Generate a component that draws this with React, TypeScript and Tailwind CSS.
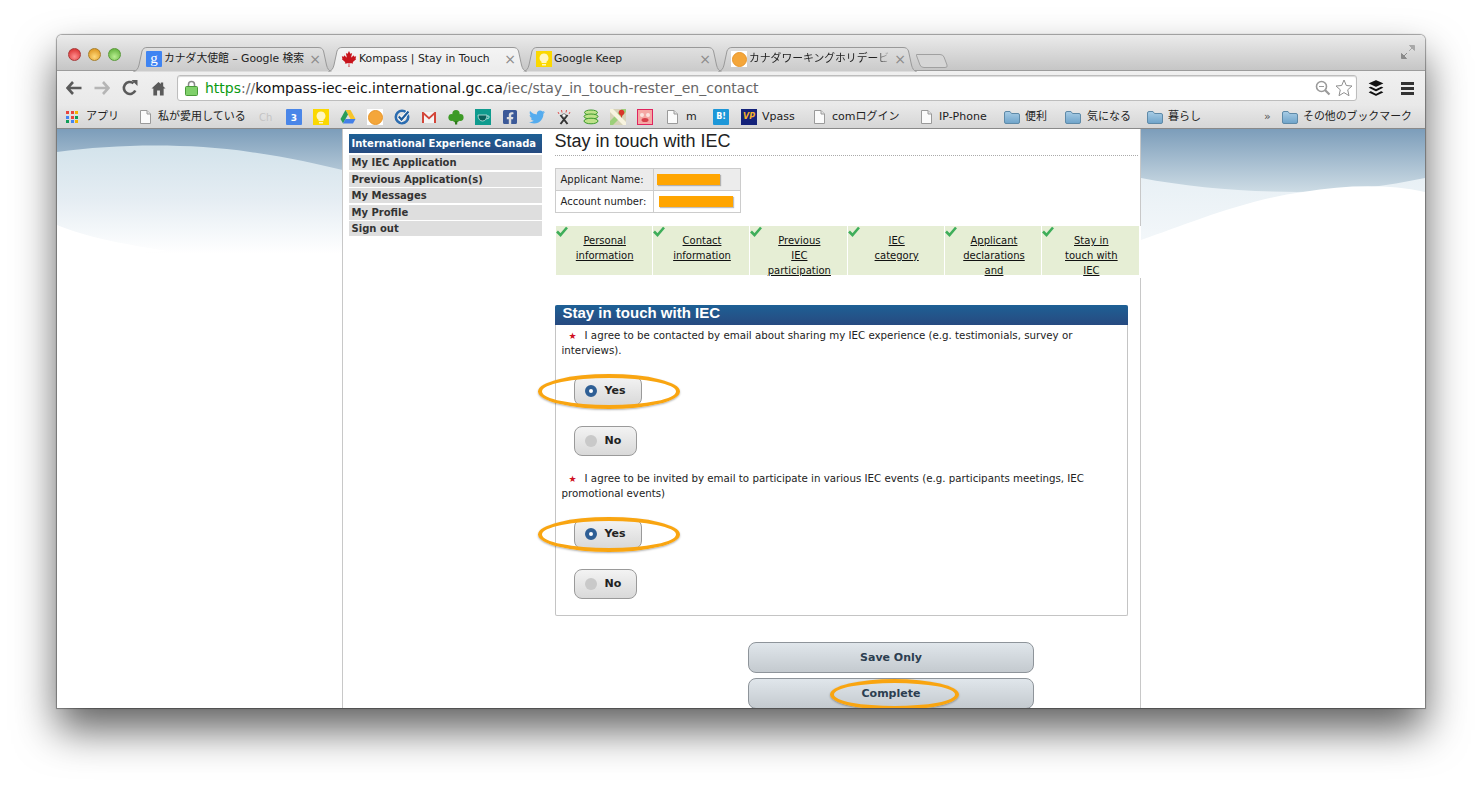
import type { ReactNode } from "react";
import { FaBuffer, FaCanadianMapleLeaf, FaFacebookSquare, FaTwitter } from "react-icons/fa";

const UI_FONT = "font-['DejaVu_Sans','Noto_Sans_CJK_JP',sans-serif]";

function Tab({ icon, title, active, fade }: { icon: ReactNode; title: string; active?: boolean; fade?: boolean }) {
  return (
    <div className={`relative h-[24px] w-[195px] ${active ? "z-10" : ""}`}>
      <svg width="199" height="25" viewBox="0 0 199 25" className="absolute left-0 top-0">
        <defs>
          <linearGradient id="tabOff" x1="0" y1="0" x2="0" y2="1">
            <stop offset="0" stopColor="#e0e0e0" />
            <stop offset="1" stopColor="#cacaca" />
          </linearGradient>
          <linearGradient id="tabOn" x1="0" y1="0" x2="0" y2="1">
            <stop offset="0" stopColor="#f4f4f4" />
            <stop offset="1" stopColor="#ececec" />
          </linearGradient>
        </defs>
        <path
          d="M0.5 24.5 C3.5 24 5 22 6 18 L9 4 C10 1.5 11.5 0.5 14 0.5 L185 0.5 C188 0.5 189.500 1.500 190.500 4 L193.500 18 C194.500 22 196 24 198.500 24.5"
          fill={active ? "url(#tabOn)" : "url(#tabOff)"}
          stroke="#999999"
        />
      </svg>
      <div className="relative flex h-full items-center pl-[13px] pr-[7px]">
        <span className="flex h-4 w-4 shrink-0 items-center justify-center">{icon}</span>
        <span
          className={`ml-[2px] flex-1 whitespace-nowrap pt-[1px] text-[10.800px] text-[#222] ${
            fade ? "[mask-image:linear-gradient(to_right,black_88%,transparent)]" : ""
          }`}
        >
          {title}
        </span>
        <span className="ml-[2px] text-[14px] leading-none text-[#8a8a8a]">×</span>
      </div>
    </div>
  );
}

function GoogleIcon() {
  return (
    <span className="flex h-4 w-4 items-center justify-center rounded-[1px] bg-[#3f84f2] pb-[3px] font-['Liberation_Serif',serif] text-[15px] leading-[12px] text-white">
      g
    </span>
  );
}

function KeepIcon() {
  return (
    <span className="flex h-4 w-4 items-center justify-center bg-[#fbd800]">
      <svg width="10" height="13" viewBox="0 0 10 13">
        <path d="M5 0.500 A4.500 4.500 0 0 1 7.500 8.700 L7.500 10 L2.500 10 L2.500 8.700 A4.500 4.500 0 0 1 5 0.500 Z" fill="#fff6c0" />
        <rect x="3" y="11" width="4" height="1.500" fill="#fff6c0" />
      </svg>
    </span>
  );
}

function OrangeCircle() {
  return (
    <span className="flex h-4 w-4 items-center justify-center bg-white">
      <span className="h-[15px] w-[15px] rounded-full border border-[#e8962a] bg-[#f4a63a]" />
    </span>
  );
}

function PageIcon() {
  return (
    <svg width="11" height="14" viewBox="0 0 11 14" className="shrink-0">
      <path d="M0.500 0.500 H7 L10.500 4 V13.500 H0.500 Z" fill="#fbfbfb" stroke="#9a9a9a" />
      <path d="M7 0.500 V4 H10.500" fill="#e2e2e2" stroke="#9a9a9a" />
    </svg>
  );
}

function FolderIcon() {
  return (
    <svg width="16" height="13" viewBox="0 0 16 13" className="shrink-0">
      <defs>
        <linearGradient id="folder" x1="0" y1="0" x2="0" y2="1">
          <stop offset="0" stopColor="#a9cde6" />
          <stop offset="1" stopColor="#6ea3c9" />
        </linearGradient>
      </defs>
      <path d="M0.500 2 Q0.500 0.500 2 0.500 H6 L7.500 2.500 H14 Q15.500 2.500 15.500 4 V11 Q15.500 12.500 14 12.500 H2 Q0.500 12.500 0.500 11 Z" fill="url(#folder)" stroke="#5f8aa8" />
    </svg>
  );
}

function Favicons() {
  return (
    <div className="ml-[16px] flex items-center gap-[11px]">
      <span className="flex h-4 w-4 items-center justify-center rounded-[1px] bg-[#4a86e8] pt-[2px] text-[9px] font-bold leading-none text-white">3</span>
      <KeepIcon />
      <svg width="16" height="16" viewBox="0 0 16 16">
        <path d="M5.500 1 H10.500 L15.500 10 H10.500 Z" fill="#f7c52b" />
        <path d="M5.500 1 L8 5.500 L3 14.500 L0.500 10 Z" fill="#2a9d58" />
        <path d="M3 14.500 L5.500 10 H15.500 L13 14.500 Z" fill="#4480e8" />
      </svg>
      <OrangeCircle />
      <svg width="16" height="16" viewBox="0 0 16 16">
        <circle cx="8" cy="8" r="6.200" fill="none" stroke="#2b6cb0" strokeWidth="2.600" />
        <path d="M4.800 7.500 L7.500 10.500 L14.500 2.500" fill="none" stroke="#fff" strokeWidth="4" />
        <path d="M4.800 7.500 L7.500 10.500 L14.500 2.500" fill="none" stroke="#1f5c9c" strokeWidth="2.200" />
      </svg>
      <svg width="16" height="16" viewBox="0 0 16 16">
        <rect x="1" y="3" width="14" height="11" fill="#f4f4f4" />
        <path d="M1 14 V3 H2.500 L8 8 L13.500 3 H15 V14 H13 V6 L8 10.500 L3 6 V14 Z" fill="#d3463a" />
      </svg>
      <svg width="16" height="16" viewBox="0 0 16 16">
        <circle cx="8" cy="4.500" r="3.600" fill="#3d9a26" />
        <circle cx="3.800" cy="8.500" r="3.400" fill="#3d9a26" />
        <circle cx="12.200" cy="8.500" r="3.400" fill="#3d9a26" />
        <circle cx="8" cy="10" r="3.400" fill="#3d9a26" />
        <rect x="7" y="12" width="2.200" height="3.500" fill="#2f7a1c" />
      </svg>
      <svg width="16" height="16" viewBox="0 0 16 16">
        <rect width="16" height="16" fill="#0f9b8e" />
        <path d="M3 6 H12 C12 10 10 12 7.500 12 C5 12 3 10 3 6 Z" fill="#0a5f5a" stroke="#c6ebe6" strokeWidth="0.800" />
        <path d="M12 7 H14 V9 L11.500 10" fill="none" stroke="#c6ebe6" strokeWidth="0.800" />
      </svg>
      <FaFacebookSquare className="h-4 w-4 text-[#3b5998]" />
      <FaTwitter className="h-4 w-4 text-[#55acee]" />
      <svg width="16" height="16" viewBox="0 0 16 16">
        <path d="M4.500 6 L11.500 15 M11.500 6 L4.500 15" stroke="#333" strokeWidth="2" />
        <circle cx="8" cy="6.500" r="1.800" fill="#fff" stroke="#555" strokeWidth="0.700" />
        <path d="M2 3 L3 5 M5.500 1 L6 3.500 M10.500 1 L10 3.500 M14 3 L13 5" stroke="#e05050" strokeWidth="1" />
      </svg>
      <svg width="16" height="16" viewBox="0 0 16 16">
        <ellipse cx="8" cy="3.500" rx="6.500" ry="2.500" fill="#bfe28a" stroke="#3c9a2c" />
        <ellipse cx="8" cy="7.500" rx="7" ry="2.500" fill="#bfe28a" stroke="#3c9a2c" />
        <ellipse cx="8" cy="12" rx="7" ry="2.800" fill="#bfe28a" stroke="#3c9a2c" />
      </svg>
      <svg width="16" height="16" viewBox="0 0 16 16">
        <rect width="16" height="16" fill="#d6d2b8" />
        <path d="M0 12 L12 0 H16 V3 L3 16 H0 Z" fill="#9ccf7a" />
        <path d="M3 0 L16 13 V16 H13 L0 3 V0 Z" fill="#f8f4e0" />
        <circle cx="11.500" cy="3.500" r="2.800" fill="#d9352b" />
        <path d="M10 5 L11.500 9 L13 5 Z" fill="#d9352b" />
      </svg>
      <svg width="16" height="16" viewBox="0 0 16 16">
        <rect x="0.500" y="0.500" width="15" height="15" fill="#f5a8a4" stroke="#e0245e" />
        <circle cx="5" cy="6" r="2" fill="#fbe4e0" />
        <circle cx="11" cy="6" r="2" fill="#fbe4e0" />
        <ellipse cx="8" cy="11" rx="3.500" ry="2" fill="#d8404a" />
      </svg>
    </div>
  );
}

function BookmarkBar() {
  return (
    <div className={`flex h-[24px] items-center border-b border-[#8a8a8a] bg-gradient-to-b from-[#e9e9e9] to-[#d6d6d6] pl-[9px] pt-[1px] text-[11px] text-[#222] whitespace-nowrap ${UI_FONT}`}>
      <span className="grid h-3 w-3 shrink-0 grid-cols-3 gap-[1.500px]">
        {["#e8453c", "#e8453c", "#f4b400", "#4285f4", "#e8453c", "#0f9d58", "#0f9d58", "#4285f4", "#f4b400"].map((c, i) => (
          <span key={i} className={c === "#e8453c" ? "bg-[#e8453c]" : c === "#f4b400" ? "bg-[#f4b400]" : c === "#4285f4" ? "bg-[#4285f4]" : "bg-[#0f9d58]"} />
        ))}
      </span>
      <span className="ml-[8px]">アプリ</span>
      <span className="ml-[21px]"><PageIcon /></span>
      <span className="ml-[7px] w-[89px]">私が愛用している</span>
      <span className="ml-[12px] w-[12px] text-[10px] text-[#c4c4c4]">Ch</span>
      <div className="-ml-[1px]"><Favicons /></div>
      <span className="ml-[14px]"><PageIcon /></span>
      <span className="ml-[8px] w-[11px]">m</span>
      <span className="ml-[16px] flex h-4 w-4 items-center justify-center rounded-[1px] bg-[#1d97d8] text-[8px] font-bold leading-none text-white">B!</span>
      <span className="ml-[12px] flex h-4 w-4 items-center justify-center bg-[#14227a] text-[8px] font-bold italic leading-none text-[#f5b02a]">VP</span>
      <span className="ml-[5px] w-[32px]">Vpass</span>
      <span className="ml-[20px]"><PageIcon /></span>
      <span className="ml-[7px] w-[67px]">comログイン</span>
      <span className="ml-[22px]"><PageIcon /></span>
      <span className="ml-[7px] w-[50px]">IP-Phone</span>
      <span className="ml-[15px]"><FolderIcon /></span>
      <span className="ml-[5px] w-[23px]">便利</span>
      <span className="ml-[17px]"><FolderIcon /></span>
      <span className="ml-[6px] w-[44px]">気になる</span>
      <span className="ml-[16px]"><FolderIcon /></span>
      <span className="ml-[5px] w-[33px]">暮らし</span>
      <span className="ml-[63px] w-[8px] text-[#555]">»</span>
      <span className="ml-[10px]"><FolderIcon /></span>
      <span className="ml-[5px] text-[10.900px]">その他のブックマーク</span>
    </div>
  );
}

function Toolbar() {
  return (
    <div className="flex h-[34px] items-center bg-gradient-to-b from-[#f0f0f0] to-[#e9e9e9] pl-[9px]">
      <svg width="16" height="14" viewBox="0 0 16 14" className="shrink-0">
        <path d="M7 1 L1.500 7 L7 13 M2 7 H15.500" fill="none" stroke="#5a5a5a" strokeWidth="2.600" />
      </svg>
      <svg width="16" height="14" viewBox="0 0 16 14" className="ml-[12px] shrink-0">
        <path d="M9 1 L14.500 7 L9 13 M14 7 H0.500" fill="none" stroke="#b5b5b5" strokeWidth="2.600" />
      </svg>
      <svg width="16" height="16" viewBox="0 0 16 16" className="ml-[12px] shrink-0">
        <path d="M13.300 10.500 A6 6 0 1 1 11.500 3.200" fill="none" stroke="#5a5a5a" strokeWidth="2.600" />
        <path d="M9.500 0 H15.500 V6 Z" fill="#5a5a5a" />
      </svg>
      <svg width="15" height="15" viewBox="0 0 16 16" className="ml-[13px] shrink-0">
        <path d="M8 1 L0.500 8 H2.500 V15.500 H6.500 V10 H9.500 V15.500 H13.500 V8 H15.500 L13 5.600 V1.500 H10.500 V3.300 Z" fill="#5a5a5a" />
      </svg>
      <div className={`ml-[11px] flex h-[26px] w-[1180px] items-center rounded-[3px] border border-[#bdbdbd] bg-white pl-[7px] pr-[3px] shadow-[inset_0_1px_1px_rgba(0,0,0,0.15)] ${UI_FONT}`}>
        <svg width="13" height="16" viewBox="0 0 13 16" className="shrink-0">
          <path d="M3.500 7 V4.500 A3 3 0 0 1 9.500 4.500 V7" fill="none" stroke="#8a8a8a" strokeWidth="1.500" />
          <rect x="0.500" y="6.500" width="12" height="9" rx="1" fill="#7fd06a" stroke="#4a9a3a" />
        </svg>
        <span className="ml-[7px] flex-1 whitespace-nowrap pt-[1px] text-[14px]">
          <span className="text-[#0b9a12]">https</span>
          <span className="text-[#666]">://</span>
          <span className="text-[#111]">kompass-iec-eic.international.gc.ca</span>
          <span className="text-[#666]">/iec/stay_in_touch-rester_en_contact</span>
        </span>
        <svg width="16" height="16" viewBox="0 0 16 16" className="shrink-0">
          <circle cx="6.500" cy="6.500" r="5" fill="none" stroke="#9a9a9a" strokeWidth="1.600" />
          <path d="M10 10 L14.500 14.500" stroke="#9a9a9a" strokeWidth="2.200" />
          <path d="M4 6.500 H9" stroke="#9a9a9a" strokeWidth="1.200" />
        </svg>
        <svg width="18" height="18" viewBox="0 0 18 18" className="ml-[4px] shrink-0">
          <path d="M9 1 L11.300 6.500 L17 7 L12.700 10.800 L14 16.700 L9 13.600 L4 16.700 L5.300 10.800 L1 7 L6.700 6.500 Z" fill="#fff" stroke="#8f8f8f" />
        </svg>
      </div>
      <FaBuffer className="ml-[10px] h-[18px] w-[18px] shrink-0 text-[#111]" />
      <div className="ml-[16px] flex w-[13px] shrink-0 flex-col gap-[2px]">
        <span className="h-[3px] bg-[#333]" />
        <span className="h-[3px] bg-[#333]" />
        <span className="h-[3px] bg-[#333]" />
      </div>
    </div>
  );
}

function TitleBar() {
  return (
    <div className={`relative flex h-[36px] shrink-0 items-end border-b border-[#9c9c9c] bg-gradient-to-b from-[#ebebeb] to-[#c6c6c6] ${UI_FONT}`}>
      <div className="absolute left-[11px] top-[13px] flex gap-[7px]">
        <span className="h-[13px] w-[13px] rounded-full border border-[#a83a3a] bg-[radial-gradient(circle_at_50%_70%,#ff8f8f,#d42020)]" />
        <span className="h-[13px] w-[13px] rounded-full border border-[#a8802a] bg-[radial-gradient(circle_at_50%_70%,#ffd97a,#d88a10)]" />
        <span className="h-[13px] w-[13px] rounded-full border border-[#5a9a3a] bg-[radial-gradient(circle_at_50%_70%,#b8ee90,#56a830)]" />
      </div>
      <div className="relative z-10 -mb-[1px] ml-[76px] flex">
        <Tab icon={<GoogleIcon />} title="カナダ大使館 – Google 検索" />
        <Tab active icon={<FaCanadianMapleLeaf className="h-4 w-4 text-[#c8141c]" />} title="Kompass | Stay in Touch" />
        <Tab icon={<KeepIcon />} title="Google Keep" />
        <Tab fade icon={<OrangeCircle />} title="カナダワーキングホリデービ" />
      </div>
      <svg width="34" height="14" viewBox="0 0 34 14" className="mb-[2px] ml-[3px]">
        <path d="M0.500 0.500 H24 Q27 0.500 28 3 L31 11 Q32 13.500 29 13.500 H8 Q5 13.500 4 11 L1 3 Q0 0.500 0.500 0.500 Z" fill="#d6d6d6" stroke="#a0a0a0" />
      </svg>
      <svg width="14" height="14" viewBox="0 0 14 14" className="absolute right-[10px] top-[10px]">
        <path d="M8.500 0.500 H13.500 V5.500 Z M8 6 L11 3" fill="#a8a8a8" stroke="#a8a8a8" />
        <path d="M0.500 8.500 V13.500 H5.500 Z M6 8 L3 11" fill="#8a8a8a" stroke="#8a8a8a" />
      </svg>
    </div>
  );
}

function Waves() {
  return (
    <svg viewBox="0 0 1368 579" className="absolute inset-0 h-full w-full">
      <defs>
        <linearGradient id="sky" x1="0" y1="0" x2="0" y2="1">
          <stop offset="0" stopColor="#7c9dba" />
          <stop offset="1" stopColor="#d0dee6" />
        </linearGradient>
        <linearGradient id="lightLeft" x1="0" y1="0" x2="0" y2="1">
          <stop offset="0" stopColor="#d3e3eb" />
          <stop offset="0.500" stopColor="#e5edf3" />
          <stop offset="1" stopColor="#ffffff" />
        </linearGradient>
        <linearGradient id="lightRight" x1="0" y1="0" x2="0" y2="1">
          <stop offset="0" stopColor="#e8f0f5" />
          <stop offset="1" stopColor="#f6f9fb" />
        </linearGradient>
      </defs>
      <rect width="1368" height="65" fill="url(#sky)" />
      <path d="M0 23 C60 15 130 14 193 23 C230 28 260 35 290 42 V125 H0 Z" fill="url(#lightLeft)" />
      <path d="M0 96 C30 108 60 114 110 122 L0 130 Z" fill="#ffffff" />
      <path d="M1084 49 C1130 58 1190 63 1240 63 C1290 62 1330 57 1368 49 V130 H1084 Z" fill="url(#lightRight)" />
      <path d="M1084 111 C1130 95 1190 70 1246 63 C1290 56 1330 55 1368 63 V140 H1084 Z" fill="#ffffff" />
    </svg>
  );
}

function Check() {
  return (
    <svg width="12" height="11" viewBox="0 0 12 11" className="absolute left-0 top-0">
      <path d="M1 5.500 L4.500 9 L11 1.500" fill="none" stroke="#3fae5a" strokeWidth="2.600" />
    </svg>
  );
}

function Step({ lines }: { lines: string[] }) {
  return (
    <div className="relative h-[49px] bg-[#e6eed5] pl-[2px] pt-[7px] text-center text-[10px] leading-[15px] text-[#111] underline">
      <Check />
      {lines.map((l) => (
        <div key={l}>{l}</div>
      ))}
    </div>
  );
}

function Oval({ className }: { className: string }) {
  return <span className={`pointer-events-none absolute z-10 rounded-[50%] border-[4px] border-[#f9a511] shadow-[0_1px_2px_rgba(0,0,0,0.3)] ${className}`} />;
}

function Choice({ label, on, width }: { label: string; on?: boolean; width: string }) {
  return (
    <div className={`relative ml-[18px] flex h-[30px] items-center rounded-[8px] border border-[#9a9a9a] bg-gradient-to-b from-[#f3f3f3] to-[#d9d9d9] pl-[10px] ${width}`}>
      {on ? (
        <span className="h-3 w-3 rounded-full border-[4px] border-[#2f5f95] bg-white" />
      ) : (
        <span className="h-3 w-3 rounded-full bg-[#c9c9c9]" />
      )}
      <span className="ml-[8px] pt-[1px] text-[11px] font-bold text-[#222]">{label}</span>
      {on && <Oval className="-left-[37px] -top-[3px] h-[35px] w-[142px]" />}
    </div>
  );
}

function Required() {
  return <span className="ml-[7px] mr-[8px] text-[9px] leading-none text-[#d01020]">★</span>;
}

function Page() {
  const nav = ["My IEC Application", "Previous Application(s)", "My Messages", "My Profile", "Sign out"];
  const steps = [
    ["Personal", "information"],
    ["Contact", "information"],
    ["Previous", "IEC", "participation"],
    ["IEC", "category"],
    ["Applicant", "declarations", "and"],
    ["Stay in", "touch with", "IEC"],
  ];
  return (
    <div className="relative flex-1 overflow-hidden bg-white">
      <Waves />
      <div className={`relative mx-auto flex h-full w-[799px] border-x border-[#c8c8c8] bg-white text-[10.250px] text-[#222] ${UI_FONT}`}>
        <aside className="ml-[6px] w-[193px] shrink-0 pt-[5px]">
          <div className="flex h-[19px] items-center whitespace-nowrap bg-gradient-to-b from-[#1d6095] to-[#264a80] pl-[3px] text-[10px] font-bold text-white">
            International Experience Canada
          </div>
          <div className="mt-[2px] flex flex-col gap-[1.500px]">
            {nav.map((n) => (
              <div key={n} className="flex h-[15px] items-center bg-[#dedede] pl-[3px] text-[10px] font-bold text-[#333]">
                {n}
              </div>
            ))}
          </div>
        </aside>

        <main className="relative ml-[13px] w-[584px] shrink-0 pt-[2px]">
          <h1 className="mr-[1px] h-[25px] border-b border-dotted border-[#aaa] font-['Liberation_Sans',sans-serif] text-[18px] leading-[20px] text-[#222]">
            Stay in touch with IEC
          </h1>
          <table className="mt-[12px] w-[186px] border-collapse border border-[#ccc] text-[10px]">
            <tbody>
              <tr className="h-[22px] bg-[#ececec]">
                <td className="w-[98px] border border-[#ccc] pl-[5px]">Applicant Name:</td>
                <td className="border border-[#ccc] pl-[3px]">
                  <div className="h-[11px] w-[63px] bg-[#ffa500] shadow-[1px_1px_1px_rgba(0,0,0,0.25)]" />
                </td>
              </tr>
              <tr className="h-[22px]">
                <td className="border border-[#ccc] pl-[5px]">Account number:</td>
                <td className="border border-[#ccc] pl-[5px]">
                  <div className="h-[11px] w-[74px] bg-[#ffa500] shadow-[1px_1px_1px_rgba(0,0,0,0.25)]" />
                </td>
              </tr>
            </tbody>
          </table>

          <div className="relative ml-[1px] mt-[13px] grid w-[583px] grid-cols-6 gap-[1px]">
            {steps.map((s) => (
              <Step key={s.join()} lines={s} />
            ))}
            <span className="absolute -right-[2px] top-0 h-[52px] w-[2px] bg-white" />
          </div>

          <section className="mt-[30px] w-[573px] rounded-[2px] border border-t-0 border-[#c4c4c4] pb-[16px]">
            <h2 className="-mx-px flex h-[20px] items-center rounded-t-[2px] bg-gradient-to-b from-[#1d6095] to-[#264a80] pb-[3px] pl-[8px] font-['Liberation_Sans',sans-serif] text-[15px] font-bold text-white">
              Stay in touch with IEC
            </h2>
            <p className="whitespace-nowrap px-[6px] pt-[3px] leading-[15px]">
              <Required />I agree to be contacted by email about sharing my IEC experience (e.g. testimonials, survey or
              <br />
              interviews).
            </p>
            <div className="mt-[18px]"><Choice on label="Yes" width="w-[68px]" /></div>
            <div className="mt-[20px]"><Choice label="No" width="w-[63px]" /></div>
            <p className="mt-[15px] whitespace-nowrap px-[6px] leading-[15px]">
              <Required />I agree to be invited by email to participate in various IEC events (e.g. participants meetings, IEC
              <br />
              promotional events)
            </p>
            <div className="mt-[18px]"><Choice on label="Yes" width="w-[68px]" /></div>
            <div className="mt-[20px]"><Choice label="No" width="w-[63px]" /></div>
          </section>

          <div className="ml-[193px] mt-[26px] flex w-[286px] flex-col gap-[5px] text-[11px] font-bold text-[#2c3e50]">
            <button className="h-[31px] rounded-[8px] border border-[#8e949a] bg-gradient-to-b from-[#e0e6eb] to-[#c4cacf] pl-[1px] pt-[2px]">Save Only</button>
            <button className="relative h-[31px] rounded-[8px] border border-[#8e949a] bg-gradient-to-b from-[#e0e6eb] to-[#c4cacf] pl-[1px] pt-[2px]">
              Complete
              <Oval className="left-[81px] top-0 h-[31px] w-[129px]" />
            </button>
          </div>
        </main>
      </div>
    </div>
  );
}

export default function App() {
  return (
    <div className="h-[787px] w-[1482px] overflow-hidden bg-white pl-[57px] pt-[35px]">
      <div className="flex h-[673px] w-[1368px] flex-col overflow-hidden rounded-t-[5px] shadow-[0_22px_42px_rgba(0,0,0,0.62),0_0_1px_1px_rgba(0,0,0,0.35)]">
        <TitleBar />
        <div className={UI_FONT}>
          <Toolbar />
        </div>
        <BookmarkBar />
        <Page />
      </div>
    </div>
  );
}
